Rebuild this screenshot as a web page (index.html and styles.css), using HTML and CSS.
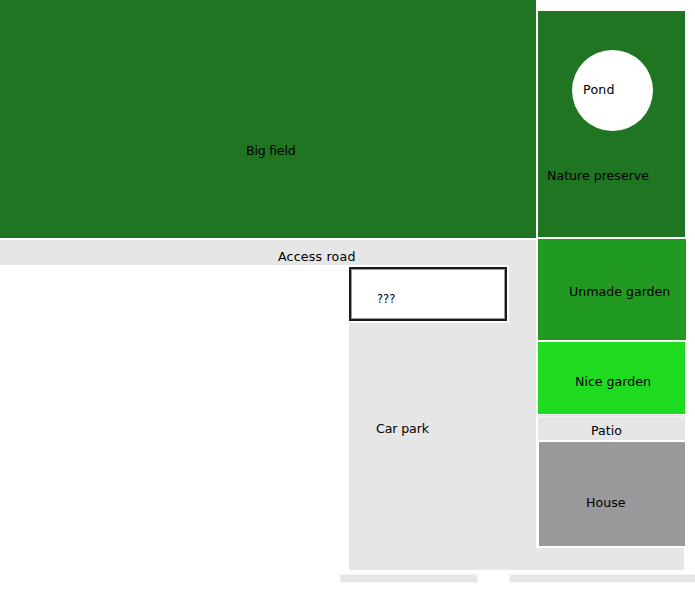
FILE: index.html
```html
<!DOCTYPE html>
<html lang="en">
<head>
<meta charset="utf-8">
<title>Site map</title>
<link rel="stylesheet" href="styles.css">
</head>
<body>
<main class="map">
  <div class="area big-field"><span class="label big-field-label">Big field</span></div>
  <div class="area preserve"><span class="label preserve-label">Nature preserve</span></div>
  <div class="area pond"><span class="label pond-label">Pond</span></div>
  <div class="area road"><span class="label road-label">Access road</span></div>
  <div class="area park-upper"><span class="label park-label">Car park</span></div>
  <div class="area park-lower"></div>
  <div class="unknown-halo"></div>
  <div class="area unknown"><span class="label unknown-label">???</span></div>
  <div class="area unmade"><span class="label unmade-label">Unmade garden</span></div>
  <div class="area nice"><span class="label nice-label">Nice garden</span></div>
  <div class="area patio"><span class="label patio-label">Patio</span></div>
  <div class="area house"><span class="label house-label">House</span></div>
  <div class="area strip-left"></div>
  <div class="area strip-right"></div>
</main>
</body>
</html>
```
FILE: styles.css
```css
html, body { margin: 0; padding: 0; background: #fff; }
.map { position: relative; width: 695px; height: 595px; overflow: hidden; font: 12.6px/16px "DejaVu Sans", sans-serif; color: #000; }
.area { position: absolute; }
.label { position: absolute; white-space: nowrap; }
.big-field { left: 0; top: 0; width: 536px; height: 238px; background: #1f7521; }
.big-field-label { left: 246px; top: 143px; letter-spacing: -0.2px; }
.preserve { left: 538px; top: 11px; width: 147px; height: 226px; background: #1f7521; }
.preserve-label { left: 9px; top: 157px; }
.pond { left: 572px; top: 50px; width: 81px; height: 81px; border-radius: 50%; background: #fff; }
.pond-label { left: 11px; top: 32px; letter-spacing: 0.25px; }
.road { left: 0; top: 240px; width: 536px; height: 25px; background: #e6e6e6; }
.road-label { left: 278px; top: 9px; letter-spacing: 0.2px; }
.park-upper { left: 349px; top: 265px; width: 187px; height: 305px; background: #e6e6e6; }
.park-label { left: 27px; top: 156px; letter-spacing: -0.12px; }
.park-lower { left: 536px; top: 548px; width: 148px; height: 22px; background: #e6e6e6; }
.unknown-halo { position: absolute; left: 349px; top: 265px; width: 160px; height: 58px; background: #fff; }
.unknown { left: 349px; top: 267px; width: 154px; height: 50px; background: #fff; border: 2px solid #1a1a1a; outline: 1px solid #999; outline-offset: -3px; }
.unknown-label { left: 26px; top: 22px; font-size: 11.5px; }
.unmade { left: 538px; top: 239px; width: 148px; height: 101px; background: #219a21; }
.unmade-label { left: 31px; top: 45px; }
.nice { left: 538px; top: 342px; width: 147px; height: 72px; background: #1fdb1f; }
.nice-label { left: 37px; top: 32px; }
.patio { left: 538px; top: 415px; width: 147px; height: 25px; background: linear-gradient(#dedede 0 1px, #f1f1f1 1px 2px, #e6e6e6 2px); }
.patio-label { left: 53px; top: 8px; }
.house { left: 539px; top: 442px; width: 146px; height: 104px; background: #999; }
.house-label { left: 47px; top: 53px; }
.strip-left { left: 341px; top: 575px; width: 136px; height: 7px; background: #e6e6e6; box-shadow: 0 0 0 1px #f4f4f4; }
.strip-right { left: 510px; top: 575px; width: 185px; height: 7px; background: #e6e6e6; box-shadow: 0 0 0 1px #f4f4f4; }
```
